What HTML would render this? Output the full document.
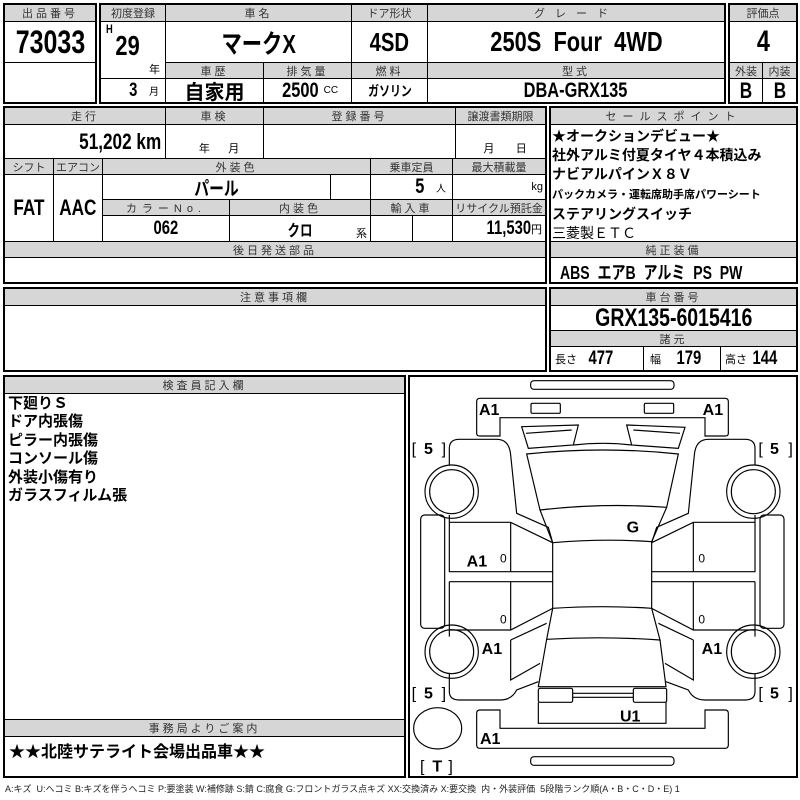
<!DOCTYPE html>
<html><head><meta charset="utf-8"><style>
body{margin:0;width:800px;height:800px;background:#fff;position:relative;overflow:hidden;font-family:"Liberation Sans","Noto Sans CJK JP",sans-serif;color:#000}
.c{position:absolute;box-sizing:border-box;border:1px solid #000;display:flex;align-items:center;justify-content:center;white-space:nowrap}
.g{background:#d6d6d6;font-size:11px;color:#333;letter-spacing:3px}
.o{position:absolute;box-sizing:border-box;border:2px solid #000}
.v{font-weight:bold}
.n{display:inline-block;transform:scaleX(.78);font-weight:bold}
.nr{transform-origin:right center}
.s{font-size:10px;font-weight:normal;margin-left:6px}
.t{position:absolute;font-weight:bold;font-size:15px;white-space:nowrap}
</style></head><body>
<div class="c g" style="left:4px;top:4px;width:92px;height:18px">出品番号</div>
<div class="c" style="left:4px;top:21px;width:92px;height:42px"><span class="n" style="font-size:32px">73033</span></div>
<div class="c" style="left:4px;top:62px;width:92px;height:41px"></div>
<div class="o" style="left:3px;top:3px;width:94px;height:101px"></div>
<div class="c g" style="left:100px;top:4px;width:66px;height:18px;letter-spacing:0">初度登録</div>
<div class="c g" style="left:165px;top:4px;width:187px;height:18px">車名</div>
<div class="c g" style="left:351px;top:4px;width:77px;height:18px;letter-spacing:0">ドア形状</div>
<div class="c g" style="left:427px;top:4px;width:298px;height:18px;letter-spacing:10px">グレード</div>
<div class="c" style="left:100px;top:21px;width:66px;height:58px"></div>
<div class="t" style="left:105px;top:22px;font-size:12px"><span class="n">H</span></div>
<div class="t" style="left:112px;top:30px;font-size:28px"><span class="n">29</span></div>
<div class="t" style="left:149px;top:61px;font-size:11px;font-weight:normal">年</div>
<div class="c" style="left:100px;top:78px;width:66px;height:25px;justify-content:flex-end;padding-right:6px"><span class="n" style="font-size:19px">3</span><span class="s" style="margin-left:10px">月</span></div>
<div class="c" style="left:165px;top:21px;width:187px;height:42px"><span class="n" style="font-size:26px">マークX</span></div>
<div class="c" style="left:351px;top:21px;width:77px;height:42px"><span class="n" style="font-size:26px">4SD</span></div>
<div class="c" style="left:427px;top:21px;width:298px;height:42px"><span class="n" style="font-size:28px">250S&nbsp; Four&nbsp; 4WD</span></div>
<div class="c g" style="left:165px;top:62px;width:99px;height:17px">車歴</div>
<div class="c g" style="left:263px;top:62px;width:89px;height:17px">排気量</div>
<div class="c g" style="left:351px;top:62px;width:77px;height:17px">燃料</div>
<div class="c g" style="left:427px;top:62px;width:298px;height:17px">型式</div>
<div class="c" style="left:165px;top:78px;width:99px;height:25px;font-size:20px;font-weight:bold">自家用</div>
<div class="c" style="left:263px;top:78px;width:89px;height:25px"><span class="n" style="font-size:21px;margin-right:-6px">2500</span><span class="s">CC</span></div>
<div class="c" style="left:351px;top:78px;width:77px;height:25px"><span class="n" style="font-size:14px">ガソリン</span></div>
<div class="c" style="left:427px;top:78px;width:298px;height:25px"><span class="n" style="font-size:21px">DBA-GRX135</span></div>
<div class="o" style="left:99px;top:3px;width:627px;height:101px"></div>
<div class="c g" style="left:729px;top:4px;width:68px;height:18px;letter-spacing:0">評価点</div>
<div class="c" style="left:729px;top:21px;width:68px;height:42px"><span class="n" style="font-size:30px">4</span></div>
<div class="c g" style="left:729px;top:62px;width:34px;height:17px;letter-spacing:0">外装</div>
<div class="c g" style="left:762px;top:62px;width:35px;height:17px;letter-spacing:0">内装</div>
<div class="c" style="left:729px;top:78px;width:34px;height:25px"><span class="n" style="font-size:22px">B</span></div>
<div class="c" style="left:762px;top:78px;width:35px;height:25px"><span class="n" style="font-size:22px">B</span></div>
<div class="o" style="left:728px;top:3px;width:70px;height:101px"></div>
<div class="c g" style="left:4px;top:107px;width:162px;height:18px">走行</div>
<div class="c g" style="left:165px;top:107px;width:99px;height:18px">車検</div>
<div class="c g" style="left:263px;top:107px;width:193px;height:18px">登録番号</div>
<div class="c g" style="left:455px;top:107px;width:91px;height:18px;letter-spacing:0">譲渡書類期限</div>
<div class="c" style="left:4px;top:124px;width:162px;height:35px;justify-content:flex-end;padding-right:4px"><span class="n nr" style="font-size:22px">51,202 km</span></div>
<div class="c" style="left:165px;top:124px;width:99px;height:35px;align-items:flex-end;font-size:11px;padding-bottom:2px">&nbsp;&nbsp;&nbsp;年&nbsp;&nbsp;&nbsp;&nbsp;&nbsp;&nbsp;月</div>
<div class="c" style="left:263px;top:124px;width:193px;height:35px"></div>
<div class="c" style="left:455px;top:124px;width:91px;height:35px;align-items:flex-end;font-size:11px;padding-bottom:2px">&nbsp;&nbsp;&nbsp;月&nbsp;&nbsp;&nbsp;&nbsp;&nbsp;&nbsp;&nbsp;日</div>
<div class="c g" style="left:4px;top:158px;width:50px;height:17px;letter-spacing:0">シフト</div>
<div class="c g" style="left:53px;top:158px;width:50px;height:17px;letter-spacing:0">エアコン</div>
<div class="c g" style="left:102px;top:158px;width:269px;height:17px">外装色</div>
<div class="c g" style="left:370px;top:158px;width:83px;height:17px;letter-spacing:0">乗車定員</div>
<div class="c g" style="left:452px;top:158px;width:94px;height:17px;letter-spacing:0">最大積載量</div>
<div class="c" style="left:4px;top:174px;width:50px;height:68px"><span class="n" style="font-size:22px">FAT</span></div>
<div class="c" style="left:53px;top:174px;width:50px;height:68px"><span class="n" style="font-size:22px">AAC</span></div>
<div class="c" style="left:102px;top:174px;width:229px;height:26px"><span class="n" style="font-size:19px">パール</span></div>
<div class="c" style="left:330px;top:174px;width:41px;height:26px"></div>
<div class="c" style="left:370px;top:174px;width:83px;height:26px;justify-content:flex-end;padding-right:6px"><span class="n" style="font-size:21px">5</span><span class="s" style="margin-left:10px">人</span></div>
<div class="c" style="left:452px;top:174px;width:94px;height:26px;justify-content:flex-end;padding-right:2px;font-size:11px">kg</div>
<div class="c g" style="left:102px;top:199px;width:128px;height:17px;letter-spacing:5px">カラーNo.</div>
<div class="c g" style="left:229px;top:199px;width:142px;height:17px">内装色</div>
<div class="c g" style="left:370px;top:199px;width:83px;height:17px">輸入車</div>
<div class="c g" style="left:452px;top:199px;width:94px;height:17px;letter-spacing:0">リサイクル預託金</div>
<div class="c" style="left:102px;top:215px;width:128px;height:27px"><span class="n" style="font-size:19px">062</span></div>
<div class="c" style="left:229px;top:215px;width:142px;height:27px"><span class="n" style="font-size:16px">クロ</span></div>
<div class="t" style="left:356px;top:225px;font-size:11px;font-weight:normal">系</div>
<div class="c" style="left:370px;top:215px;width:43px;height:27px"></div>
<div class="c" style="left:412px;top:215px;width:41px;height:27px"></div>
<div class="c" style="left:452px;top:215px;width:94px;height:27px;justify-content:flex-end;padding-right:3px"><span class="n nr" style="font-size:19px">11,530</span><span style="font-size:11px">円</span></div>
<div class="c g" style="left:4px;top:241px;width:542px;height:17px">後日発送部品</div>
<div class="o" style="left:3px;top:106px;width:544px;height:178px"></div>
<div class="c g" style="left:550px;top:107px;width:247px;height:18px;letter-spacing:6px">セールスポイント</div>
<div style="position:absolute;left:552px;top:127px;font-size:14px;font-weight:bold;line-height:19px;white-space:nowrap">★オークションデビュー★<br>社外アルミ付夏タイヤ４本積込み<br>ナビアルパインＸ８Ｖ<br><span style="font-size:11px">パックカメラ・運転席助手席パワーシート</span><br>ステアリングスイッチ<br><span style="font-weight:normal">三菱製ＥＴＣ</span></div>
<div class="c g" style="left:550px;top:241px;width:247px;height:17px">純正装備</div>
<div class="t" style="left:560px;top:259px;font-size:18px"><span class="n" style="transform-origin:left center">ABS&nbsp; エアB&nbsp; アルミ&nbsp; PS&nbsp; PW</span></div>
<div class="o" style="left:549px;top:106px;width:249px;height:178px"></div>
<div class="c g" style="left:4px;top:288px;width:542px;height:18px">注意事項欄</div>
<div class="o" style="left:3px;top:287px;width:544px;height:85px"></div>
<div class="c g" style="left:550px;top:288px;width:247px;height:18px">車台番号</div>
<div class="c" style="left:550px;top:305px;width:247px;height:26px"><span class="n" style="font-size:25px">GRX135-6015416</span></div>
<div class="c g" style="left:550px;top:330px;width:247px;height:17px">諸元</div>
<div class="c" style="left:550px;top:346px;width:94px;height:26px;justify-content:flex-start;padding-left:4px"><span style="font-size:11px">長さ</span><span class="n" style="font-size:19px;margin-left:8px">477</span></div>
<div class="c" style="left:643px;top:346px;width:78px;height:26px;justify-content:flex-start;padding-left:6px"><span style="font-size:11px">幅</span><span class="n" style="font-size:19px;margin-left:12px">179</span></div>
<div class="c" style="left:720px;top:346px;width:77px;height:26px;justify-content:flex-start;padding-left:4px"><span style="font-size:11px">高さ</span><span class="n" style="font-size:19px;margin-left:2px">144</span></div>
<div class="o" style="left:549px;top:287px;width:249px;height:85px"></div>
<div class="c g" style="left:4px;top:376px;width:401px;height:18px">検査員記入欄</div>
<div style="position:absolute;left:8px;top:395px;font-size:15px;font-weight:bold;line-height:18.4px;white-space:nowrap">下廻りＳ<br>ドア内張傷<br>ピラー内張傷<br>コンソール傷<br>外装小傷有り<br>ガラスフィルム張</div>
<div class="c g" style="left:4px;top:719px;width:401px;height:18px">事務局よりご案内</div>
<div class="t" style="left:9px;top:738px;font-size:16px">★★北陸サテライト会場出品車★★</div>
<div class="o" style="left:3px;top:375px;width:403px;height:403px"></div>
<div class="o" style="left:408px;top:375px;width:390px;height:403px"></div>
<svg style="position:absolute;left:400px;top:370px" width="400" height="430" viewBox="0 0 1200 1290" fill="none" stroke="#000" stroke-width="3.5">
<rect x="392" y="32" width="430" height="26" rx="10"/>
<path d="M230,95 Q230,85 240,85 L975,85 Q985,85 985,95 L985,190 Q985,198 975,198 L915,198 L915,143 L300,143 L300,198 L240,198 Q230,198 230,190 Z"/>
<rect x="393" y="100" width="88" height="30" rx="4"/><rect x="733" y="100" width="88" height="30" rx="4"/>
<path d="M365,170 L535,165 L520,225 L385,235 Z M378,190 L515,180 M680,165 L855,172 L835,235 L695,225 Z M700,180 L840,190"/>
<path d="M520,225 Q610,215 695,225"/>
<path d="M380,252 Q610,228 835,252 L800,412 Q610,398 420,420 Z"/>
<path d="M420,420 L458,518 Q610,505 755,515 L800,412"/>
<path d="M458,518 L458,715 Q610,705 755,715 L755,515"/>
<path d="M458,715 L440,808 Q610,798 780,810 L755,715"/>
<path d="M440,808 L415,950 L798,950 L780,810"/>
<rect x="415" y="955" width="103" height="42" rx="5"/><rect x="700" y="955" width="100" height="42" rx="5"/>
<path d="M518,970 L700,970 M518,982 L700,982"/>
<path d="M415,997 L415,1060 L798,1060 L798,997"/>
<path d="M230,1030 Q230,1020 240,1020 L300,1020 L300,1075 L915,1075 L915,1020 L975,1020 Q985,1020 985,1030 L985,1125 Q985,1135 975,1135 L240,1135 Q230,1135 230,1125 Z"/>
<rect x="392" y="1160" width="430" height="26" rx="10"/>
<path d="M148,285 L148,235 Q148,208 178,208 L290,208 Q328,208 332,255 L350,430 L445,472 L458,518"/>
<path d="M148,435 L148,457 L332,457 L458,518 M148,457 L148,605 L458,605 M148,635 L458,635 M148,635 L148,780 L332,780 L458,715 M332,457 L332,605 M332,635 L332,780"/>
<path d="M148,780 L148,800 M332,810 L440,760 M332,810 L332,930 L420,880 M148,910 L148,965 Q148,990 178,990 L300,990 Q335,990 350,960 L415,935"/>
<rect x="62" y="435" width="72" height="340" rx="12"/>
<circle cx="155" cy="365" r="80"/><circle cx="155" cy="365" r="66"/>
<circle cx="155" cy="845" r="80"/><circle cx="155" cy="845" r="66"/>
<path d="M1065,285 L1065,235 Q1065,208 1035,208 L925,208 Q887,208 883,255 L865,430 L770,472 L755,518"/>
<path d="M1065,435 L1065,457 L880,457 L755,518 M1065,457 L1065,605 L755,605 M1065,635 L755,635 M1065,635 L1065,780 L880,780 L755,715 M880,457 L880,605 M880,635 L880,780"/>
<path d="M1065,780 L1065,800 M880,810 L775,760 M880,810 L880,930 L795,880 M1065,910 L1065,965 Q1065,990 1035,990 L915,990 Q880,990 865,960 L798,935"/>
<rect x="1080" y="435" width="72" height="340" rx="12"/>
<circle cx="1060" cy="365" r="80"/><circle cx="1060" cy="365" r="66"/>
<circle cx="1060" cy="845" r="80"/><circle cx="1060" cy="845" r="66"/>
<ellipse cx="113" cy="1075" rx="72" ry="62"/>
<g fill="#000" stroke="none" font-family="Liberation Sans" font-weight="bold" font-size="48">
<text x="237" y="135">A1</text><text x="908" y="135">A1</text>
<text x="680" y="488">G</text>
<text x="200" y="590">A1</text><text x="245" y="852">A1</text><text x="905" y="852">A1</text>
<text x="660" y="1055">U1</text><text x="240" y="1122">A1</text>
<text x="35" y="252" font-weight="normal">[</text><text x="72" y="252">5</text><text x="125" y="252" font-weight="normal">]</text>
<text x="1075" y="252" font-weight="normal">[</text><text x="1110" y="252">5</text><text x="1165" y="252" font-weight="normal">]</text>
<text x="35" y="985" font-weight="normal">[</text><text x="72" y="985">5</text><text x="125" y="985" font-weight="normal">]</text>
<text x="1075" y="985" font-weight="normal">[</text><text x="1110" y="985">5</text><text x="1165" y="985" font-weight="normal">]</text>
<text x="60" y="1205" font-weight="normal">[</text><text x="97" y="1205">T</text><text x="145" y="1205" font-weight="normal">]</text>
<g font-weight="normal" font-size="36"><text x="300" y="578">0</text><text x="300" y="760">0</text><text x="895" y="578">0</text><text x="895" y="760">0</text></g>
</g>
</svg>
<div style="position:absolute;left:5px;top:782px;font-size:9px;white-space:nowrap;color:#222">A:キズ&nbsp; U:ヘコミ B:キズを伴うヘコミ P:要塗装 W:補修跡 S:錆 C:腐食 G:フロントガラス点キズ XX:交換済み X:要交換&nbsp; 内・外装評価&nbsp; 5段階ランク順(A・B・C・D・E) 1</div>
</body></html>
